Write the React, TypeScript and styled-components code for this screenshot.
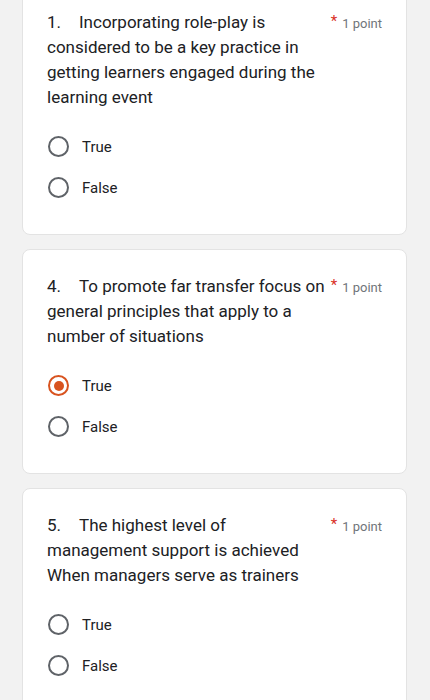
import React from "react";
import styled, { createGlobalStyle } from "styled-components";

const Global = createGlobalStyle`
  html, body { margin: 0; padding: 0; background: #f2f2f2; }
  body { font-family: Roboto, "Noto Sans", Arial, sans-serif; color: #202124; }
`;

const List = styled.div`
  display: flex;
  flex-direction: column;
  gap: 14px;
  padding: 0 23px 0 22px;
  margin-top: -15px;
`;

const Card = styled.section`
  background: #fff;
  border: 1px solid #e3e3e3;
  border-radius: 8px;
  padding: 24px 24px 26px 24px;
`;

const Header = styled.div`
  display: flex;
  justify-content: space-between;
  align-items: flex-start;
  gap: 8px;
`;

const Title = styled.div`
  flex: 1;
  min-width: 0;
  white-space: nowrap;
  font-size: 17px;
  line-height: 25px;
  color: #202124;
`;

const Num = styled.span`
  display: inline-block;
  width: 32px;
`;

const Points = styled.div`
  display: flex;
  align-items: flex-start;
  flex-shrink: 0;
  gap: 5px;
  font-size: 13px;
  line-height: 25px;
  color: #70757a;
  white-space: nowrap;
  padding-top: 1px;
`;

const Star = styled.span`
  color: #d93025;
  font-size: 15px;
  line-height: 20px;
`;

const Options = styled.div`
  display: flex;
  flex-direction: column;
  margin-top: 16px;
`;

const Option = styled.label`
  display: flex;
  align-items: center;
  height: 41px;
  gap: 13px;
  font-size: 15px;
  color: #202124;
`;

const Radio = styled.span<{ $on?: boolean }>`
  box-sizing: border-box;
  width: 21px;
  height: 21px;
  border-radius: 50%;
  border: 2px solid ${(p) => (p.$on ? "#d8531f" : "#5f6368")};
  display: flex;
  align-items: center;
  justify-content: center;
  flex-shrink: 0;
  margin-left: 1px;
  &::after {
    content: "";
    display: ${(p) => (p.$on ? "block" : "none")};
    width: 10px;
    height: 10px;
    border-radius: 50%;
    background: #d8531f;
  }
`;

type Q = { n: number; lines: string[]; sel?: number };

const questions: Q[] = [
  {
    n: 1,
    lines: [
      "Incorporating role-play is",
      "considered to be a key practice in",
      "getting learners engaged during the",
      "learning event",
    ],
  },
  {
    n: 4,
    lines: [
      "To promote far transfer focus on",
      "general principles that apply to a",
      "number of situations",
    ],
    sel: 0,
  },
  {
    n: 5,
    lines: [
      "The highest level of",
      "management support is achieved",
      "When managers serve as trainers",
    ],
  },
];

export default function App() {
  return (
    <>
      <Global />
      <List>
        {questions.map((q) => (
          <Card key={q.n}>
            <Header>
              <Title>
                <Num>{q.n}.</Num>
                {q.lines.map((l, i) => (
                  <React.Fragment key={i}>
                    {i > 0 && <br />}
                    {l}
                  </React.Fragment>
                ))}
              </Title>
              <Points>
                <Star>*</Star>1 point
              </Points>
            </Header>
            <Options>
              {["True", "False"].map((o, i) => (
                <Option key={o}>
                  <Radio $on={q.sel === i} />
                  {o}
                </Option>
              ))}
            </Options>
          </Card>
        ))}
      </List>
    </>
  );
}
